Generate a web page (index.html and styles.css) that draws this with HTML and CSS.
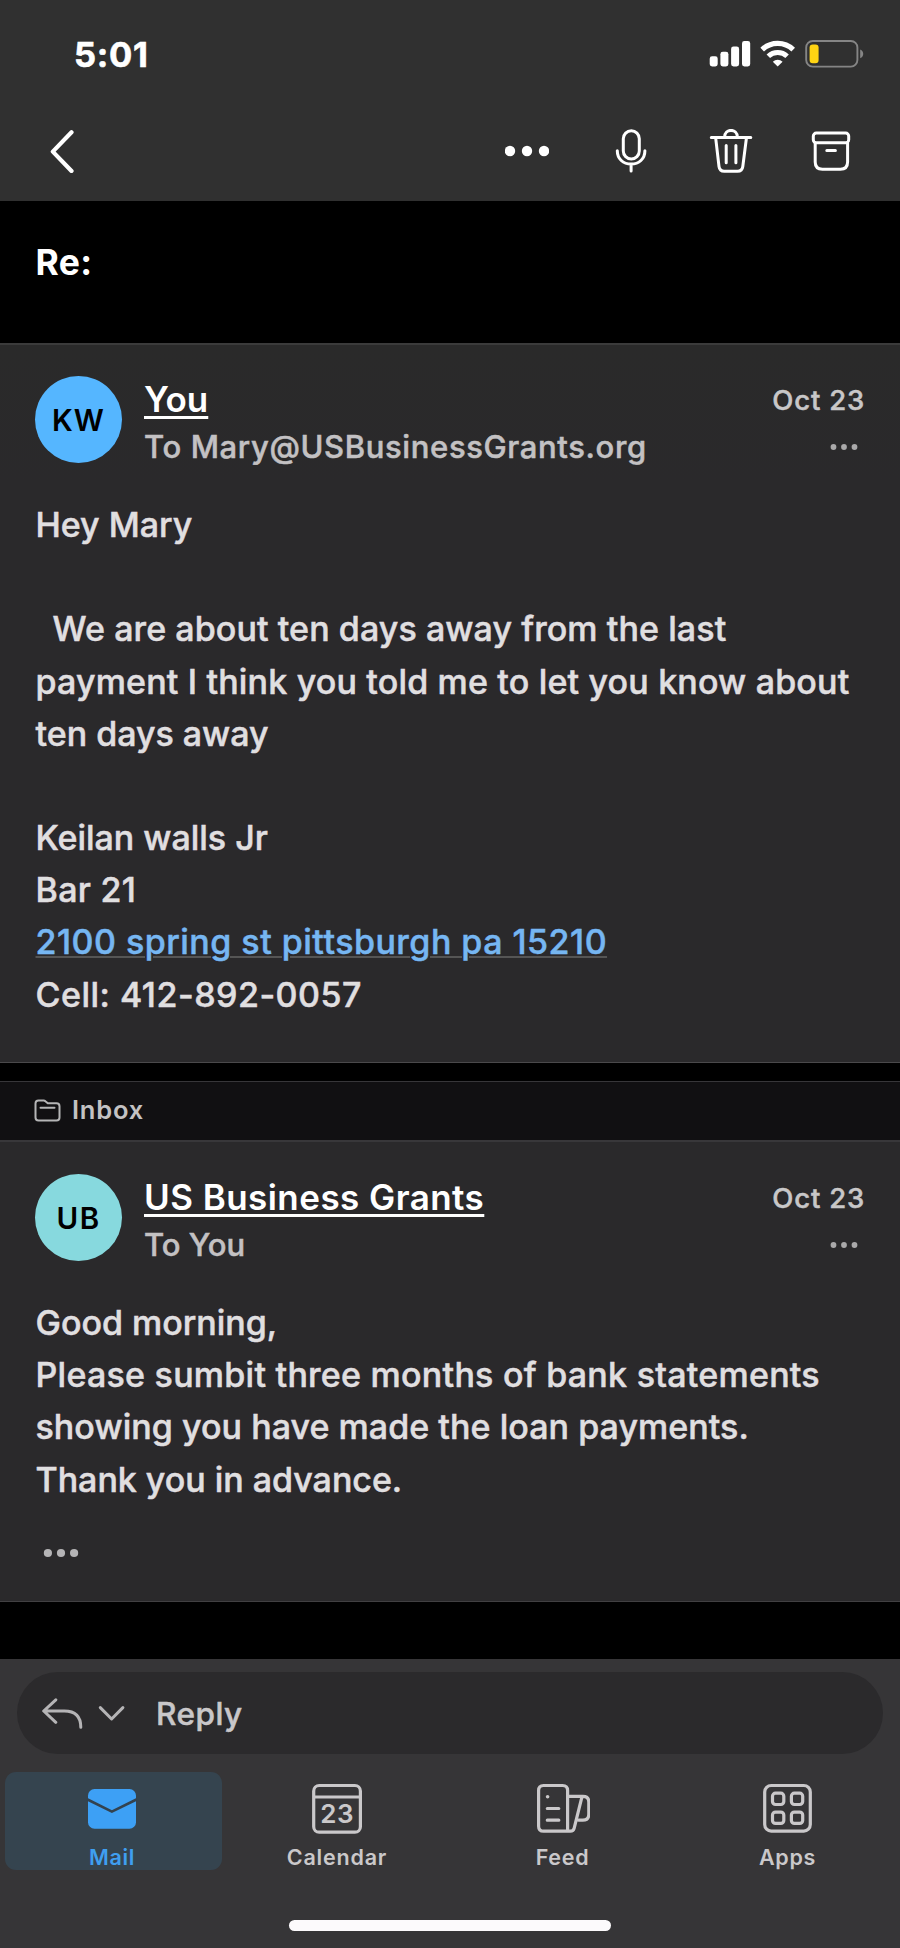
FILE: index.html
```html
<!DOCTYPE html>
<html lang="en">
<head>
<meta charset="utf-8">
<title>Mail</title>
<link rel="stylesheet" href="styles.css">
</head>
<body>
<div class="phone">
  <header class="top">
    <div class="status">
      <span class="clock">5:01</span>
      <div class="indicators">
        <svg class="signal" width="42" height="28" viewBox="709 40 42 28" fill="#fff"><rect x="709.7" y="56.3" width="8" height="10.2" rx="2.4"/><rect x="720.4" y="51.8" width="8" height="14.7" rx="2.4"/><rect x="731.1" y="46.5" width="8" height="20" rx="2.4"/><rect x="742" y="41" width="8.2" height="25.5" rx="2.4"/></svg>
        <svg class="wifi" width="36" height="28" viewBox="760 40 36 28" fill="none" stroke="#fff"><path d="M762.2 49.6a22.4 22.4 0 0 1 31 0" stroke-width="5.2"/><path d="M768.3 56.2a13.6 13.6 0 0 1 18.8 0" stroke-width="5"/><path d="M777.7 66.4l-4.9-4.7a7.2 7.2 0 0 1 9.8 0z" fill="#fff" stroke="none"/></svg>
        <svg class="battery" width="60" height="28" viewBox="805 40 60 28"><rect x="806.2" y="41" width="51.2" height="25.6" rx="6.5" fill="none" stroke="#858585" stroke-width="1.9"/><rect x="809.6" y="44.4" width="9" height="18.8" rx="3.2" fill="#ffd413"/><path d="M860.2 49.4v8.8q3-1.2 3-4.4t-3-4.4z" fill="#858585"/></svg>
      </div>
    </div>
    <nav class="toolbar">
      <svg width="26" height="44" viewBox="49 129 26 44" fill="none" stroke="#fff" stroke-width="4.2" stroke-linecap="round" stroke-linejoin="round"><path d="M71.5 132.3 52.8 151.6 71.5 171"/></svg>
      <div class="actions">
        <svg width="44" height="44" viewBox="-22 -22 44 44" fill="#fff"><circle cx="-17" r="5.2"/><circle r="5.2"/><circle cx="17" r="5.2"/></svg>
        <svg class="mic" width="44" height="44" viewBox="609 128.5 44 44" fill="none" stroke="#fff" stroke-width="3" stroke-linecap="round"><rect x="623.3" y="130.3" width="16" height="28.2" rx="8"/><path d="M617.3 150.2c0 8.2 6 13.4 13.8 13.4s13.8-5.2 13.8-13.4M631.1 163.8v6.8"/></svg>
        <svg width="44" height="44" viewBox="709 128.5 44 44" fill="none" stroke="#fff" stroke-width="3" stroke-linecap="round" stroke-linejoin="round"><path d="M711.3 137h39.5M724.6 136.800c0-9.200 12.800-9.200 12.800 0M715.700 137.700l3.300 28.300q.6 4.700 5.300 4.700h13.200q4.700 0 5.300-4.700l3.600-28.300M726.200 145v17.200M735.900 145v17.200"/></svg>
        <svg width="44" height="44" viewBox="809 128.500 44 44" fill="none" stroke="#fff" stroke-width="3" stroke-linecap="round"><rect x="813.300" y="132.600" width="35.400" height="9.600" rx="3"/><path d="M815.200 142.500v19q0 7.200 7.200 7.200h18q7.200 0 7.200-7.200v-19M826.800 150.100h8.600"/></svg>
      </div>
    </nav>
  </header>

  <h1 class="subject">Re:</h1>

  <main>
    <article class="message first">
      <div class="head">
        <div class="avatar blue">KW</div>
        <div class="people">
          <div class="sender"><span class="name you">You</span><time class="date">Oct 23</time></div>
          <div class="recipient"><span class="to mary">To Mary@USBusinessGrants.org</span>
            <svg class="more" width="30" height="10" viewBox="-15 -5 30 10"><circle cx="-10.5" r="2.900"/><circle r="2.900"/><circle cx="10.5" r="2.900"/></svg></div>
        </div>
      </div>
      <div class="body">
        <p>Hey Mary</p>
        <p class="gap"><span class="indent">We are about ten days away from the last</span><br><span class="wide">payment I think you told me to let you know about</span><br>ten days away</p>
        <p class="gap">Keilan walls Jr<br><span class="bar">Bar 21</span><br><a class="address">2100 spring st pittsburgh pa 15210</a><br><span class="cell">Cell: 412-892-0057</span></p>
      </div>
    </article>

    <div class="folder">
      <svg width="27" height="24" viewBox="0 0 27 24" fill="none" stroke="#b5b5b6" stroke-width="2" stroke-linecap="round" stroke-linejoin="round"><path d="M1.500 4.500q0-3 3-3h5.200q1 0 1.700.7l2.400 2.100h8.700q3 0 3 3v11.200q0 3-3 3h-18q-3 0-3-3zM6.500 8.700h14"/></svg>
      <span class="folder-name">Inbox</span>
    </div>

    <article class="message second">
      <div class="head">
        <div class="avatar teal">UB</div>
        <div class="people">
          <div class="sender"><span class="name">US Business Grants</span><time class="date">Oct 23</time></div>
          <div class="recipient"><span class="to">To You</span>
            <svg class="more" width="30" height="10" viewBox="-15 -5 30 10"><circle cx="-10.5" r="2.900"/><circle r="2.900"/><circle cx="10.5" r="2.900"/></svg></div>
        </div>
      </div>
      <div class="body">
        <p>Good morning,<br><span class="wider">Please sumbit three months of bank statements</span><br><span class="snug">showing you have made the loan payments.</span><br>Thank you in advance.</p>
      </div>
      <svg class="expand" width="36" height="10" viewBox="-18 -5 36 10"><circle cx="-13.1" r="4.100"/><circle r="4.100"/><circle cx="13.1" r="4.100"/></svg>
    </article>
  </main>

  <footer class="bottom">
    <div class="reply">
      <svg width="42" height="32" viewBox="42 1698 42 32" fill="none" stroke="#b5b4b6" stroke-width="3" stroke-linecap="round" stroke-linejoin="round"><path d="M55.800 1700.800 43.700 1712l12.100 11.300M44.300 1712h20q16.500 0 16.500 16.300"/></svg>
      <svg class="down" width="28" height="18" viewBox="98 1705 28 18" fill="none" stroke="#b5b4b6" stroke-width="3" stroke-linecap="round" stroke-linejoin="round"><path d="M100.300 1708.600l11.300 11.400 11.300-11.400"/></svg>
      <span class="reply-label">Reply</span>
    </div>
    <nav class="tabs">
      <div class="tab active">
        <svg width="54" height="54" viewBox="85 1782 54 54"><rect x="88" y="1789" width="48" height="39.700" rx="6.500" fill="#3da0f5"/><path d="M87 1799.300l24.900 12.300 25.100-12.300" fill="none" stroke="#33424f" stroke-width="2.700"/></svg>
        <span>Mail</span>
      </div>
      <div class="tab calendar">
        <svg width="54" height="54" viewBox="310 1782 54 54"><g fill="none" stroke="#cac8ca" stroke-width="3.200"><rect x="313.700" y="1785.500" width="46.700" height="46.700" rx="5.500"/><path d="M313.700 1797h46.700"/></g><text class="day" x="337.300" y="1822.600">23</text></svg>
        <span>Calendar</span>
      </div>
      <div class="tab">
        <svg width="54" height="54" viewBox="536 1782 54 54" fill="none" stroke="#cac8ca" stroke-width="3.200" stroke-linecap="round" stroke-linejoin="round"><path d="M567.600 1831.200h-24q-5 0-5-5v-35.700q0-5 5-5h19q5 0 5 5zM567.600 1796.300h15.400q5.800 0 5.800 5.800v12.100q0 6-6 6h-4M582 1796.600l-7.800 31.500q-.8 3.100-3.800 3.100h-2.800M547.300 1808.500h11.500M547.300 1820.200h11.500"/><circle cx="547.600" cy="1796.700" r="1.800" fill="#cac8ca" stroke="none"/></svg>
        <span>Feed</span>
      </div>
      <div class="tab">
        <svg width="54" height="54" viewBox="761 1782 54 54" fill="none" stroke="#cac8ca" stroke-width="3.200"><rect x="764.700" y="1785.500" width="45.600" height="45.600" rx="6.500"/><rect x="772.500" y="1793.200" width="11.300" height="11.300" rx="3"/><rect x="791.400" y="1793.200" width="11.300" height="11.300" rx="3"/><rect x="772.500" y="1812.100" width="11.300" height="11.300" rx="3"/><rect x="791.400" y="1812.100" width="11.300" height="11.300" rx="3"/></svg>
        <span>Apps</span>
      </div>
    </nav>
    <div class="home"></div>
  </footer>
</div>
</body>
</html>
```

FILE: styles.css
```css
* { box-sizing: border-box; }
body { margin: 0; background: #000; font-family: Inter, "Liberation Sans", sans-serif; }
svg { display: block; flex: none; }
.phone { width: 900px; height: 1948px; display: flex; flex-direction: column; overflow: hidden; background: #000; }

.top { height: 201px; background: #303030; flex: none; }
.status { height: 108px; padding: 0 35px 0 74px; display: flex; align-items: center; justify-content: space-between; }
.clock { color: #fff; font-size: 34.5px; font-weight: 700; line-height: 40px; letter-spacing: 0.7px; -webkit-text-stroke: 0.6px; padding-top: 1px; }
.indicators { display: flex; }
.wifi { margin-left: 9px; }
.battery { margin-left: 9px; }
.toolbar { height: 85px; padding: 0 47px 0 49px; display: flex; align-items: center; justify-content: space-between; }
.actions { display: flex; gap: 56px; }
.mic { margin-left: 4.5px; }

.subject { margin: 0; height: 142px; flex: none; padding: 39px 0 0 35.5px; color: #fff; font-size: 35.5px; line-height: 46px; font-weight: 700; letter-spacing: 0.4px; }

.message { background: #2a292b; padding: 0 35px; color: #e0dfe0; }
.first { height: 720px; border-top: 2px solid #3b3b3b; border-bottom: 1px solid #4a494b; background: linear-gradient(#2a2a2a, #2a292b 140px); padding-top: 31px; }
.second { height: 462px; border-top: 2px solid #38373a; border-bottom: 1px solid #414042; padding-top: 32px; }
.head { display: flex; gap: 22px; height: 123px; }
.avatar { width: 87px; height: 87px; flex: none; border-radius: 50%; color: #000; font-size: 29.5px; font-weight: 600; line-height: 88px; letter-spacing: 1px; text-align: center; }
.blue { background: #55b6ff; }
.teal { background: #87d9de; letter-spacing: 1.5px; }
.people { flex: 1; display: flex; flex-direction: column; }
.sender { display: flex; justify-content: space-between; align-items: flex-start; height: 46px; line-height: 46px; }
.name { color: #fff; font-size: 35px; font-weight: 600; letter-spacing: 0.45px; text-decoration: underline; text-decoration-thickness: 3px; text-underline-offset: 4px; text-decoration-skip-ink: none; }
.you { letter-spacing: 0; }
.date { color: #c8c7c8; font-size: 27.5px; font-weight: 500; letter-spacing: 0.8px; line-height: 48px; -webkit-text-stroke: 0.5px; }
.recipient { display: flex; justify-content: space-between; align-items: center; height: 49px; color: #c3c1c3; font-size: 31px; font-weight: 500; line-height: 49px; -webkit-text-stroke: 0.5px; }
.mary { letter-spacing: 0.63px; }
.more { fill: #aaa9aa; margin: 1px 6px 0 0; }
.body { font-size: 34px; line-height: 52.17px; font-weight: 500; white-space: nowrap; padding-left: 0.5px; letter-spacing: -0.02px; -webkit-text-stroke: 0.5px; }
.body p { margin: 0; }
.body .gap { margin-top: 52.17px; }
.indent { padding-left: 17px; letter-spacing: 0.08px; }
.wide { letter-spacing: 0.17px; }
.wider { letter-spacing: 0.25px; }
.snug { letter-spacing: 0.05px; }
.bar { letter-spacing: 0.3px; }
.address { color: #76b6f2; letter-spacing: 0.48px; text-decoration: underline; text-decoration-color: #555; text-decoration-thickness: 2px; text-underline-offset: 2px; }
.cell { letter-spacing: 0.5px; }

.folder { margin-top: 18px; height: 59px; padding-left: 34px; border-top: 1px solid #373639; background: #111012; display: flex; align-items: center; gap: 11px; color: #c3c2c3; }
.folder-name { font-size: 25.5px; font-weight: 600; letter-spacing: 0.8px; padding-bottom: 4px; }

.expand { fill: #b5b4b6; margin: 42px 0 0 8px; }

.bottom { margin-top: 57px; height: 289px; flex: none; padding-top: 13px; background: #363537; }
.reply { height: 82px; margin: 0 17px; padding-left: 25px; border-radius: 41px; background: #2b2a2c; display: flex; align-items: center; color: #c9c7c9; }
.down { margin-left: 14px; }
.reply-label { margin-left: 30px; font-size: 31.5px; font-weight: 500; letter-spacing: 0.5px; -webkit-text-stroke: 0.5px; }
.tabs { display: grid; grid-template-columns: repeat(4, 225px); margin-top: 18px; }
.tab { height: 97.5px; padding-top: 10px; display: flex; flex-direction: column; align-items: center; gap: 8px; color: #cac8ca; font-size: 21.5px; font-weight: 600; line-height: 27px; letter-spacing: 0.7px; }
.active { margin: 0 3.5px 0 4.5px; padding-right: 2px; border-radius: 11px; background: #35444f; color: #3f9ff0; }
.calendar { padding-right: 1px; letter-spacing: 0.8px; }
.day { fill: #cac8ca; font-size: 26px; font-weight: 600; text-anchor: middle; }
.home { width: 322px; height: 11px; margin: 50px auto 0; border-radius: 6px; background: #fcfafc; }
```
